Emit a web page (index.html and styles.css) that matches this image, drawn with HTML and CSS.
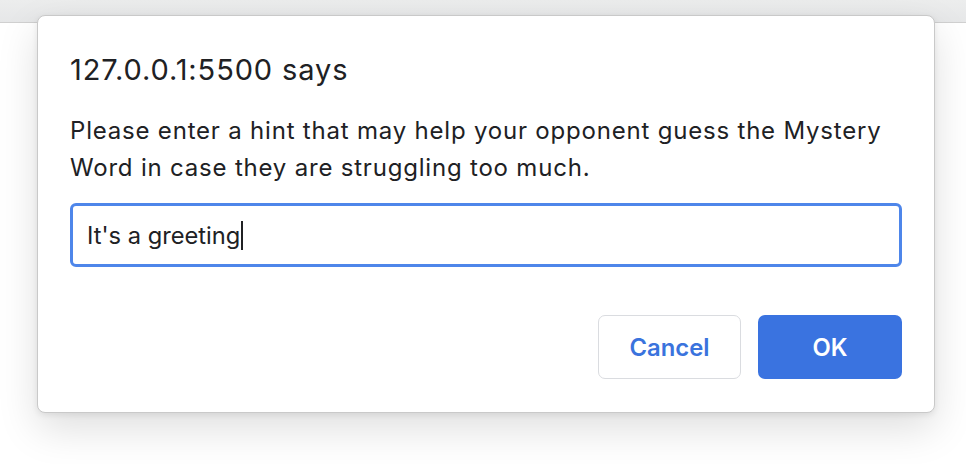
FILE: index.html
```html
<!DOCTYPE html>
<html>
<head>
<meta charset="utf-8">
<link rel="stylesheet" href="styles.css">
</head>
<body>
<div class="topbar"></div>
<div class="dialog">
  <div class="title">127.0.0.1:5500 says</div>
  <div class="message">Please enter a hint that may help your opponent guess the Mystery Word in case they are struggling too much.</div>
  <div class="field"><span class="value">It's a greeting</span><span class="caret"></span></div>
  <div class="buttons">
    <button class="btn cancel">Cancel</button>
    <button class="btn ok">OK</button>
  </div>
</div>
</body>
</html>
```
FILE: styles.css
```css
html, body {
  margin: 0;
  padding: 0;
  width: 966px;
  height: 464px;
  overflow: hidden;
  background: #ffffff;
  font-family: Inter, "Liberation Sans", sans-serif;
}
.topbar {
  height: 22px;
  background: linear-gradient(#eceded, #e6e7e8);
  border-bottom: 1px solid #d0d0d0;
}
.dialog {
  position: absolute;
  left: 37px;
  top: 15px;
  width: 898px;
  height: 398px;
  box-sizing: border-box;
  background: #fff;
  border-radius: 8px;
  border: 1px solid #c9c9c9;
  box-shadow: 0 16px 40px rgba(0,0,0,0.13), 0 2px 6px rgba(0,0,0,0.08);
  padding: 36px 32px 0 32px;
  display: flex;
  flex-direction: column;
  color: #202124;
}
.dialog > * {
  flex-shrink: 0;
}
.title {
  font-size: 29px;
  line-height: 36px;
  letter-spacing: 0.9px;
}
.message {
  margin-top: 24px;
  font-size: 24px;
  line-height: 37px;
  letter-spacing: 0.8px;
}
.field {
  margin-top: 17px;
  height: 64px;
  box-sizing: border-box;
  border: 3px solid #4e86ea;
  border-radius: 6px;
  display: flex;
  align-items: center;
  padding-left: 14px;
  font-size: 23.7px;
}
.caret {
  display: inline-block;
  width: 2px;
  height: 29px;
  background: #202124;
  margin-left: 1px;
}
.buttons {
  margin-top: 48px;
  display: flex;
  justify-content: flex-end;
  gap: 17px;
}
.btn {
  height: 64px;
  border-radius: 7px;
  font-family: Inter, "Liberation Sans", sans-serif;
  font-size: 23.8px;
  font-weight: 600;
  padding: 0;
}
.cancel {
  width: 143px;
  background: #fff;
  border: 1px solid #dadce0;
  color: #3a73dd;
}
.ok {
  width: 144px;
  background: #3a73e0;
  border: none;
  color: #fff;
}
```
